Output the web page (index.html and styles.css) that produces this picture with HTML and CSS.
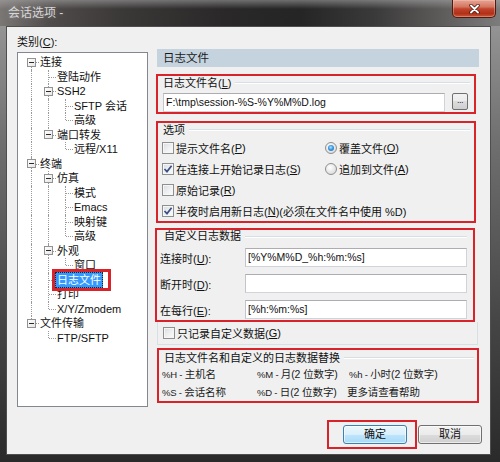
FILE: index.html
```html
<!DOCTYPE html>
<html lang="zh-CN">
<head>
<meta charset="utf-8">
<title>会话选项</title>
<link rel="stylesheet" href="styles.css">
</head>
<body>
<div class="window">
  <div class="titlebar">
    <div class="title">会话选项 -</div>
    <div class="close">
      <svg width="11" height="10" viewBox="0 0 11 10"><path d="M2 1.5 L9 8.5 M9 1.5 L2 8.5" stroke="#4a130b" stroke-width="3.4" stroke-linecap="round"/><path d="M2 1.5 L9 8.5 M9 1.5 L2 8.5" stroke="#fff" stroke-width="1.9" stroke-linecap="round"/></svg>
    </div>
  </div>
  <div class="frame">
    <div class="client">
      <div class="main">
        <div class="left">
          <div class="cat-label">类别(<u>C</u>):</div>
          <div class="tree">
            <div class="row"><span class="c start"><i class="exp"></i></span><span class="t">连接</span></div>
            <div class="row"><span class="c ln"></span><span class="c tee"></span><span class="t">登陆动作</span></div>
            <div class="row"><span class="c ln"></span><span class="c tee"><i class="exp"></i></span><span class="t">SSH2</span></div>
            <div class="row"><span class="c ln"></span><span class="c ln"></span><span class="c tee"></span><span class="t">SFTP 会话</span></div>
            <div class="row"><span class="c ln"></span><span class="c ln"></span><span class="c end"></span><span class="t">高级</span></div>
            <div class="row"><span class="c ln"></span><span class="c end"><i class="exp"></i></span><span class="t">端口转发</span></div>
            <div class="row"><span class="c ln"></span><span class="c"></span><span class="c end"></span><span class="t">远程/X11</span></div>
            <div class="row"><span class="c tee"><i class="exp"></i></span><span class="t">终端</span></div>
            <div class="row"><span class="c ln"></span><span class="c tee"><i class="exp"></i></span><span class="t">仿真</span></div>
            <div class="row"><span class="c ln"></span><span class="c ln"></span><span class="c tee"></span><span class="t">模式</span></div>
            <div class="row"><span class="c ln"></span><span class="c ln"></span><span class="c tee"></span><span class="t">Emacs</span></div>
            <div class="row"><span class="c ln"></span><span class="c ln"></span><span class="c tee"></span><span class="t">映射键</span></div>
            <div class="row"><span class="c ln"></span><span class="c ln"></span><span class="c end"></span><span class="t">高级</span></div>
            <div class="row"><span class="c ln"></span><span class="c tee"><i class="exp"></i></span><span class="t">外观</span></div>
            <div class="row"><span class="c ln"></span><span class="c ln"></span><span class="c end"></span><span class="t">窗口</span></div>
            <div class="row"><span class="c ln"></span><span class="c tee"></span><span class="t sel">日志文件</span></div>
            <div class="row"><span class="c ln"></span><span class="c tee"></span><span class="t">打印</span></div>
            <div class="row"><span class="c ln"></span><span class="c end"></span><span class="t">X/Y/Zmodem</span></div>
            <div class="row"><span class="c end"><i class="exp"></i></span><span class="t">文件传输</span></div>
            <div class="row"><span class="c"></span><span class="c end"></span><span class="t">FTP/SFTP</span></div>
          </div>
        </div>

        <div class="right">
          <div class="head">日志文件</div>

          <div class="box b1">
            <div class="legend"><span>日志文件名(<u>L</u>)</span><i class="rule"></i></div>
            <div class="field">
              <div class="input path">F:\tmp\session-%S-%Y%M%D.log</div>
              <div class="dots">...</div>
            </div>
          </div>

          <div class="box b2">
            <div class="legend"><span>选项</span><i class="rule"></i></div>
            <div class="opts">
              <div class="opt"><span class="cb"></span>提示文件名(<u>P</u>)</div>
              <div class="opt"><span class="rb on"></span>覆盖文件(<u>O</u>)</div>
              <div class="opt"><span class="cb on"><svg width="10" height="10" viewBox="0 0 10 10"><path d="M1.5 5 L4 7.6 L8.6 1.8" fill="none" stroke="#3b4f86" stroke-width="1.7"/></svg></span>在连接上开始记录日志(<u>S</u>)</div>
              <div class="opt"><span class="rb"></span>追加到文件(<u>A</u>)</div>
              <div class="opt"><span class="cb"></span>原始记录(<u>R</u>)</div>
              <div class="opt"></div>
              <div class="opt span"><span class="cb on"><svg width="10" height="10" viewBox="0 0 10 10"><path d="M1.5 5 L4 7.6 L8.6 1.8" fill="none" stroke="#3b4f86" stroke-width="1.7"/></svg></span>半夜时启用新日志(<u>N</u>)(必须在文件名中使用 %D)</div>
            </div>
          </div>

          <div class="box b3">
            <div class="legend"><span>自定义日志数据</span><i class="rule"></i></div>
            <div class="custom">
              <span>连接时(<u>U</u>):</span><div class="input">[%Y%M%D_%h:%m:%s]</div>
              <span>断开时(<u>D</u>):</span><div class="input"></div>
              <span>在每行(<u>E</u>):</span><div class="input">[%h:%m:%s]</div>
            </div>
          </div>

          <div class="onlygroup">
            <div class="opt"><span class="cb"></span>只记录自定义数据(<u>G</u>)</div>
          </div>

          <div class="box b4">
            <div class="legend"><span>日志文件名和自定义的日志数据替换</span><i class="rule"></i></div>
            <div class="subs">
              <span><span class="lat">%H - </span>主机名</span>
              <span><span class="lat">%M - </span>月(2 位数字)</span>
              <span><span class="lat">%h - </span>小时(2 位数字)</span>
              <span><span class="lat">%S - </span>会话名称</span>
              <span><span class="lat">%D - </span>日(2 位数字)</span>
              <span class="more">更多请查看帮助</span>
            </div>
          </div>
        </div>
      </div>

      <div class="footer">
        <div class="hl"><div class="btn def">确定</div></div>
        <div class="btn cancel">取消</div>
      </div>
    </div>
  </div>
</div>
</body>
</html>
```

FILE: styles.css
```css
* { box-sizing: border-box; }
html, body { margin: 0; padding: 0; }
body {
  width: 500px;
  height: 462px;
  overflow: hidden;
  font-family: "Liberation Sans", "Noto Sans CJK SC", sans-serif;
  font-size: 11px;
  color: #111;
  background: #3a3a3a;
}
u { text-decoration: underline; text-underline-offset: 1px; }

.window {
  width: 500px;
  height: 462px;
  display: flex;
  flex-direction: column;
  background: linear-gradient(to bottom, #9c9c9c 0%, #707070 30%, #454545 70%, #2a2a2a 100%);
}

.titlebar {
  height: 26px;
  flex: none;
  display: flex;
  justify-content: space-between;
  align-items: flex-start;
  background:
    linear-gradient(to bottom, rgba(170,170,170,0.55) 0, rgba(170,170,170,0) 9px),
    linear-gradient(to right, #7b7775 0, #4f4b4a 10%, #3a3737 25%, #2a2828 45%, #252525 60%, #3b3a3a 75%, #5d5b5a 88%, #7d7c7c 100%);
}
.title {
  margin: 6px 0 0 8px;
  font-size: 12px;
  line-height: 14px;
  color: #d6d6d6;
  text-shadow: 0 0 4px rgba(255,255,255,0.25);
}
.close {
  width: 44px;
  height: 18px;
  margin-right: 4px;
  border: 1px solid #4a1c14;
  border-top: none;
  border-radius: 0 0 5px 5px;
  background: linear-gradient(to bottom, #e7a595 0%, #d4765f 40%, #c2432c 52%, #b03018 80%, #cf5836 100%);
  display: flex;
  align-items: center;
  justify-content: center;
  box-shadow: inset 0 0 0 1px rgba(255,210,200,0.35);
}

.frame {
  flex: 1;
  display: flex;
  padding: 0 9px 7px 6px;
}
.client {
  flex: 1;
  display: flex;
  flex-direction: column;
  background: #f0f0f0;
  border: 1px solid #4e4e4e;
  padding: 8px 8px 5px 10px;
}

.main {
  display: grid;
  grid-template-columns: 131px 1fr;
  column-gap: 7px;
  align-items: start;
}

/* left: category tree */
.cat-label { line-height: 14px; height: 14px; }
.tree {
  margin-top: 3px;
  height: 355px;
  background: #fff;
  border: 1px solid #828790;
  padding: 2px 0 0 5px;
}
.row {
  display: flex;
  height: 14.5px;
  align-items: stretch;
}
.c {
  width: 17px;
  flex: none;
  position: relative;
}
.c.ln::before, .c.tee::before, .c.end::before, .c.start::before {
  content: "";
  position: absolute;
  left: 8px;
  top: 0;
  bottom: 0;
  border-left: 1px dotted #9a9a9a;
}
.c.end::before { bottom: 50%; }
.c.start::before { top: 50%; }
.c.tee::after, .c.end::after, .c.start::after {
  content: "";
  position: absolute;
  left: 9px;
  right: 1px;
  top: 50%;
  border-top: 1px dotted #9a9a9a;
}
.exp {
  position: absolute;
  left: 4px;
  top: 50%;
  margin-top: -4.5px;
  width: 9px;
  height: 9px;
  border: 1px solid #929292;
  background: linear-gradient(135deg, #ffffff, #e6e6e6);
  z-index: 1;
}
.exp::before {
  content: "";
  position: absolute;
  left: 1px;
  right: 1px;
  top: 3px;
  height: 1px;
  background: #2a2a2a;
}
.t {
  line-height: 14.5px;
  padding: 0 2px;
  margin-left: -2px;
  white-space: nowrap;
  color: #111;
}
.t.sel {
  position: relative;
  align-self: center;
  line-height: 16px;
  background: #3399ff;
  color: #fff;
  outline: 1px dotted #222;
  outline-offset: -1px;
}
.t.sel::after {
  content: "";
  position: absolute;
  left: -3px;
  right: -8px;
  top: -3px;
  bottom: -3px;
  border: 3px solid #d8232a;
}

/* right panel */
.right {
  padding-top: 14px;
  display: flex;
  flex-direction: column;
  align-items: flex-start;
}
.head {
  margin-left: 2px;
  width: 322px;
  height: 18px;
  line-height: 18px;
  padding-left: 6px;
  background: #c5d3df;
  font-size: 11.5px;
  color: #1a1a1a;
}
.box {
  border: 2px solid #d8232a;
}
.legend {
  display: flex;
  align-items: center;
  height: 14px;
  line-height: 14px;
  white-space: nowrap;
}
.rule {
  flex: 1;
  height: 2px;
  margin-left: 4px;
  border-top: 1px solid #d5dfe5;
  border-bottom: 1px solid #ffffff;
}

.b1 {
  margin-top: 7px;
  margin-left: 1px;
  width: 320px;
  height: 40px;
  padding: 0 4px 0 5px;
}
.field {
  display: flex;
  align-items: flex-start;
  margin-top: 3px;
}
.input {
  height: 19px;
  background: #fff;
  border: 1px solid #d0d4da;
  border-top-color: #abadb3;
  border-left-color: #c2c6cc;
  font-size: 10.5px;
  line-height: 17px;
  padding-left: 2px;
  white-space: nowrap;
  overflow: hidden;
  color: #111;
}
.input.path { width: 282px; }
.dots {
  margin-left: 7px;
  width: 16px;
  height: 17px;
  border: 1px solid #707070;
  border-radius: 2px;
  background: linear-gradient(to bottom, #f2f2f2 0%, #ebebeb 50%, #dddddd 50%, #cfcfcf 100%);
  font-size: 9px;
  line-height: 13px;
  text-align: center;
  letter-spacing: -0.5px;
  color: #333;
}

.b2 {
  margin-top: 7px;
  margin-left: 1px;
  width: 320px;
  height: 102px;
  padding: 0 4px;
}
.b2 .legend { padding-left: 1px; }
.opts {
  display: grid;
  grid-template-columns: 163px 1fr;
  grid-auto-rows: 21px;
  align-items: center;
}
.opt {
  display: flex;
  align-items: center;
  white-space: nowrap;
}
.opt.span { grid-column: 1 / -1; }
.cb {
  flex: none;
  width: 12px;
  height: 12px;
  margin-right: 2px;
  border: 1px solid #8e8f8f;
  background: linear-gradient(135deg, #d9dbde 0%, #f1f2f3 60%, #fbfbfb 100%);
  box-shadow: inset 0 0 0 1px #f6f6f6;
  display: flex;
  align-items: center;
  justify-content: center;
}
.rb {
  flex: none;
  width: 12px;
  height: 12px;
  margin-right: 2px;
  border: 1px solid #8e8f8f;
  border-radius: 50%;
  background: radial-gradient(circle at 40% 35%, #ffffff 0%, #e4e4e4 60%, #cfcfcf 100%);
  position: relative;
}
.rb.on::after {
  content: "";
  position: absolute;
  left: 2px;
  top: 2px;
  width: 6px;
  height: 6px;
  border-radius: 50%;
  background: radial-gradient(circle at 45% 40%, #b6e4fc 0%, #3a9be4 45%, #1a62b0 100%);
}

.b3 {
  margin-top: 5px;
  width: 320px;
  height: 94px;
  padding: 0 6px 0 3px;
}
.b3 .legend {
  height: 13px;
  line-height: 13px;
  padding-left: 4px;
}
.custom {
  margin-top: 5px;
  display: grid;
  grid-template-columns: 85px 222px;
  grid-auto-rows: 19px;
  row-gap: 7px;
  align-items: center;
}
.custom > span { white-space: nowrap; }

.onlygroup {
  margin-left: 2px;
  width: 321px;
  height: 23px;
  border: 1px solid #d5dfe5;
  border-top: none;
  padding-left: 5px;
  display: flex;
  align-items: center;
}
.onlygroup .cb { margin-right: 2px; }

.b4 {
  margin-top: 3px;
  margin-left: 2px;
  width: 322px;
  height: 55px;
  padding: 2px 3px 0 3px;
}
.b4 .legend {
  height: 12px;
  line-height: 12px;
  padding-left: 2px;
}
.subs {
  display: grid;
  grid-template-columns: 95px 92px 1fr;
  grid-auto-rows: 18px;
  align-items: center;
  color: #1b1b1b;
  font-size: 10.5px;
  letter-spacing: -0.1px;
}
.subs > span { white-space: nowrap; }
.subs .lat { font-size: 9.5px; letter-spacing: -0.2px; }
.subs .more { margin-left: -2px; }

/* footer buttons */
.footer {
  margin-top: 13px;
  display: flex;
  justify-content: flex-end;
  align-items: center;
}
.hl {
  border: 2px solid #d8232a;
  padding: 3px 8px 3px 14px;
}
.btn {
  width: 64px;
  height: 19px;
  border-radius: 3px;
  text-align: center;
  line-height: 17px;
  font-size: 11px;
  color: #111;
}
.btn.def {
  border: 1px solid #3c7fb1;
  background: linear-gradient(to bottom, #eaf6fd 0%, #d9f0fc 50%, #bee6fd 50%, #a7d9f5 100%);
  box-shadow: inset 0 0 0 1px rgba(255,255,255,0.6);
}
.btn.cancel {
  margin-left: 1px;
  border: 1px solid #707070;
  background: linear-gradient(to bottom, #f2f2f2 0%, #ebebeb 50%, #dddddd 50%, #cfcfcf 100%);
  box-shadow: inset 0 0 0 1px rgba(255,255,255,0.6);
}
```
